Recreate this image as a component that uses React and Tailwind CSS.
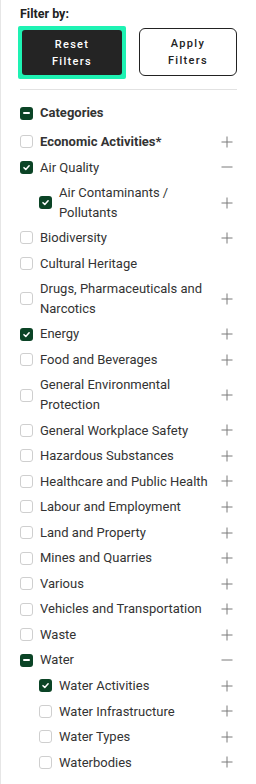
import React from 'react';

const ITEMS = [
  { label: 'Economic Activities*', bold: true, state: 'off', icon: 'plus' },
  { label: 'Air Quality', state: 'on', icon: 'minus' },
  { label: 'Air Contaminants / Pollutants', state: 'on', icon: 'plus', nested: true },
  { label: 'Biodiversity', state: 'off', icon: 'plus' },
  { label: 'Cultural Heritage', state: 'off', icon: null },
  { label: 'Drugs, Pharmaceuticals and Narcotics', state: 'off', icon: 'plus' },
  { label: 'Energy', state: 'on', icon: 'plus' },
  { label: 'Food and Beverages', state: 'off', icon: 'plus' },
  { label: 'General Environmental Protection', state: 'off', icon: 'plus' },
  { label: 'General Workplace Safety', state: 'off', icon: 'plus' },
  { label: 'Hazardous Substances', state: 'off', icon: 'plus' },
  { label: 'Healthcare and Public Health', state: 'off', icon: 'plus' },
  { label: 'Labour and Employment', state: 'off', icon: 'plus' },
  { label: 'Land and Property', state: 'off', icon: 'plus' },
  { label: 'Mines and Quarries', state: 'off', icon: 'plus' },
  { label: 'Various', state: 'off', icon: 'plus' },
  { label: 'Vehicles and Transportation', state: 'off', icon: 'plus' },
  { label: 'Waste', state: 'off', icon: 'plus' },
  { label: 'Water', state: 'mixed', icon: 'minus' },
  { label: 'Water Activities', state: 'on', icon: 'plus', nested: true },
  { label: 'Water Infrastructure', state: 'off', icon: 'plus', nested: true },
  { label: 'Water Types', state: 'off', icon: 'plus', nested: true },
  { label: 'Waterbodies', state: 'off', icon: 'plus', nested: true },
];

function Box({ state }) {
  if (state === 'off') {
    return <span className="w-[13px] h-[13px] shrink-0 rounded-[3px] border border-[#cfcfcf] bg-white" />;
  }
  return (
    <span className="w-[13px] h-[13px] shrink-0 rounded-[3px] bg-[#0b4426] flex items-center justify-center">
      {state === 'on' ? (
        <svg width="9" height="9" viewBox="0 0 10 10" fill="none">
          <path d="M2.2 5.2 4.2 7.1 7.9 3" stroke="white" strokeWidth="1.7" strokeLinecap="round" strokeLinejoin="round" />
        </svg>
      ) : (
        <span className="w-[7px] h-[2px] bg-white rounded-full" />
      )}
    </span>
  );
}

function Toggle({ icon }) {
  if (!icon) return <span className="w-[12px] shrink-0" />;
  return (
    <svg width="12" height="12" viewBox="0 0 12 12" className="shrink-0" fill="none">
      <path d="M0.5 6h11" stroke="#7a7a7a" strokeWidth="1" />
      {icon === 'plus' && <path d="M6 0.5v11" stroke="#7a7a7a" strokeWidth="1" />}
    </svg>
  );
}

export default function App() {
  return (
    <div className="w-[256px] h-[784px] bg-white border-l border-[#e6e6e6] pl-[19px] pr-[19px] text-[#333] font-['Roboto',sans-serif] overflow-hidden">
      <p className="pt-[6px] text-[12.5px] font-bold text-[#222] leading-[16px]">Filter by:</p>

      <div className="flex gap-[13px] mt-[4px]">
        <div className="rounded-[2px] bg-[#1ef2b3] p-[4px] -ml-[2px]">
          <button className="w-[100px] h-[45px] rounded-[3px] bg-[#242424] text-white text-[11px] font-medium tracking-[0.12em] leading-[17px]">
            Reset<br />Filters
          </button>
        </div>
        <button className="mt-[2px] w-[102px] h-[48px] rounded-[6px] border border-[#222] bg-white text-[#222] text-[11px] font-medium tracking-[0.12em] leading-[17px]">
          Apply<br />Filters
        </button>
      </div>

      <div className="h-px bg-[#e2e2e2] mt-[10px]" />

      <div className="flex items-center gap-[7px] mt-[16px] h-[14px]">
        <Box state="mixed" />
        <span className="text-[13px] font-bold text-[#333]">Categories</span>
      </div>

      <div className="mt-[9px]">
        {ITEMS.map((it) => (
          <div key={it.label} className={`flex items-center py-[3px] ${it.nested ? 'pl-[19px]' : ''}`}>
            <Box state={it.state} />
            <span className={`flex-1 ml-[7px] pr-[10px] text-[13px] leading-[19.55px] ${it.bold ? 'font-bold' : ''}`}>
              {it.label}
            </span>
            <span className="mr-[4px]"><Toggle icon={it.icon} /></span>
          </div>
        ))}
      </div>
    </div>
  );
}
